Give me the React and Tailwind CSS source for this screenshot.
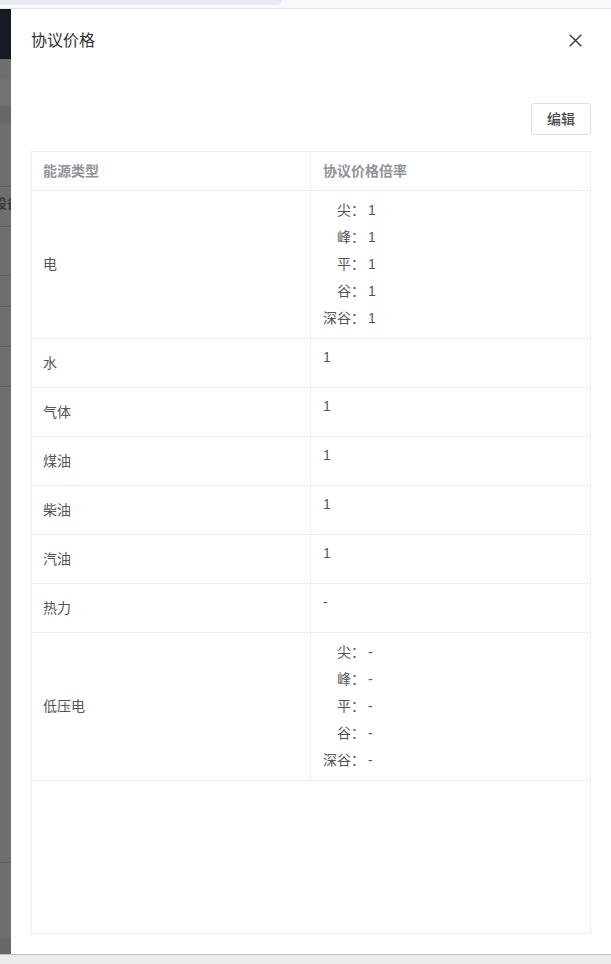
import React from "react";

const font = { fontFamily: '"Liberation Sans", "Noto Sans CJK SC", sans-serif' };

const rows = [
  { name: "电", multi: ["1", "1", "1", "1", "1"] },
  { name: "水", value: "1" },
  { name: "气体", value: "1" },
  { name: "煤油", value: "1" },
  { name: "柴油", value: "1" },
  { name: "汽油", value: "1" },
  { name: "热力", value: "-" },
  { name: "低压电", multi: ["-", "-", "-", "-", "-"] },
];

const keys = ["尖", "峰", "平", "谷", "深谷"];

function Row({ row }) {
  const multi = !!row.multi;
  return (
    <div className={`grid grid-cols-2 border-b border-[#ebeef5] ${multi ? "h-[148px]" : "h-[49px]"}`}>
      <div className="flex items-center border-r border-[#ebeef5] pl-[11px] text-[14px] text-[#555]">
        {row.name}
      </div>
      {multi ? (
        <div className="flex flex-col justify-center pl-[12px] text-[14px] text-[#555]">
          {row.multi.map((v, i) => (
            <div key={i} className="flex h-[27px] items-center">
              <span className="w-[42px] text-right">{keys[i]}：</span>
              <span className="ml-[3px]">{v}</span>
            </div>
          ))}
        </div>
      ) : (
        <div className="pl-[12px] pt-[5px] text-[14px] leading-[27px] text-[#555]">{row.value}</div>
      )}
    </div>
  );
}

export default function App() {
  return (
    <div className="flex h-[964px] w-[611px] flex-col overflow-hidden bg-white" style={font}>
      {/* top strip */}
      <div className="relative h-[9px] shrink-0 border-b border-[#e2e3ea] bg-[#f8f8fd]">
        <div className="h-[5px] w-[282px] rounded-br-[6px] bg-[#e9ebf4]" />
      </div>

      <div className="flex min-h-0 flex-1">
        {/* masked background strip */}
        <div className="flex w-[11px] shrink-0 flex-col overflow-hidden bg-[#6f6f6f]">
          <div className="h-[50px] bg-[#161a22]" />
          <div className="h-[20px]" />
          <div className="h-[27px] bg-[#727272]" />
          <div className="h-[17px] bg-[#686868]" />
          <div className="h-[64px] border-b border-[#5f5f5f]" />
          <div className="relative h-[40px] overflow-hidden border-b border-[#5f5f5f]">
            <span className="absolute left-[-6px] top-[9px] whitespace-nowrap text-[13px] font-bold leading-[16px] text-[#3a3a3a]">设备</span>
          </div>
          <div className="h-[49px] border-b border-[#5f5f5f]" />
          <div className="h-[31px] border-b border-[#5f5f5f]" />
          <div className="h-[40px] border-b border-[#5f5f5f]" />
          <div className="h-[40px] border-b border-[#5f5f5f]" />
          <div className="h-[476px] border-b border-[#5f5f5f]" />
          <div className="flex-1" />
          <div className="h-[16px] bg-[#686868]" />
        </div>

        {/* drawer */}
        <div className="flex min-w-0 flex-1 flex-col bg-white">
          <div className="flex h-[64px] shrink-0 items-center justify-between px-5">
            <span className="text-[16px] leading-[22px] text-[#303133]">协议价格</span>
            <svg width="13" height="13" viewBox="0 0 13 13" className="mr-[9px] mt-[-1px]">
              <path d="M0.7 0.7L12.3 12.3M12.3 0.7L0.7 12.3" stroke="#333" strokeWidth="1.3" fill="none" />
            </svg>
          </div>
          <div className="flex shrink-0 justify-end px-5 pt-[30px]">
            <button className="h-[32px] w-[60px] rounded-[3px] border border-[#dcdfe6] bg-white text-[14px] font-medium text-[#4a4a4a]">
              编辑
            </button>
          </div>
          <div className="mx-5 mb-[20px] mt-[16px] flex min-h-0 flex-1 flex-col border border-[#ebeef5]">
            <div className="grid h-[39px] shrink-0 grid-cols-2 border-b border-[#ebeef5] text-[14px] font-bold text-[#909399]">
              <div className="flex items-center border-r border-[#ebeef5] pl-[11px]">能源类型</div>
              <div className="flex items-center pl-[12px]">协议价格倍率</div>
            </div>
            {rows.map((r) => (
              <Row key={r.name} row={r} />
            ))}
          </div>
        </div>
      </div>

      {/* bottom strip */}
      <div className="h-[10px] shrink-0 border-t border-[#bdbdbd] bg-[#ececec]" />
    </div>
  );
}
